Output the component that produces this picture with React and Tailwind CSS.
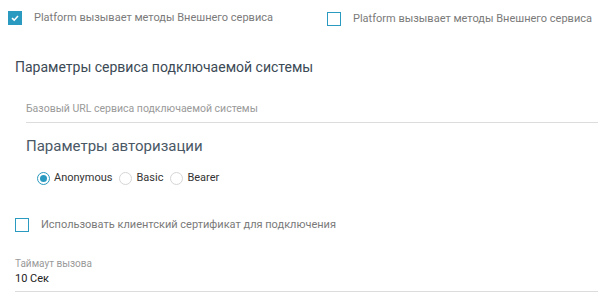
import React, { useState } from 'react';

const font = { fontFamily: 'Roboto, "Noto Sans", sans-serif' };

const Checkbox = ({ checked, label, onChange }) => (
  <label className="flex items-center cursor-pointer">
    <span
      className={
        'w-[14px] h-[14px] flex items-center justify-center border-[1.5px] border-[#2a9ac0] ' +
        (checked ? 'bg-[#2a9ac0]' : 'bg-white')
      }
      onClick={onChange}
    >
      {checked && (
        <svg width="10" height="10" viewBox="0 0 10 10">
          <path d="M2 5.2 L4.2 7.2 L8 3" fill="none" stroke="white" strokeWidth="1.6" />
        </svg>
      )}
    </span>
    <span className="ml-[12px] text-[11px] text-[#7a7a7a]">{label}</span>
  </label>
);

const Radio = ({ checked, label, onChange }) => (
  <label className="flex items-center cursor-pointer" onClick={onChange}>
    <span
      className={
        'w-[13px] h-[13px] rounded-full flex items-center justify-center border ' +
        (checked ? 'border-[#2a9ac0]' : 'border-[#d6d6d6]')
      }
    >
      {checked && <span className="w-[7px] h-[7px] rounded-full bg-[#2a9ac0]" />}
    </span>
    <span className="ml-[4px] text-[11px] text-[#333]">{label}</span>
  </label>
);

export default function App() {
  const [platformA, setPlatformA] = useState(true);
  const [platformB, setPlatformB] = useState(false);
  const [cert, setCert] = useState(false);
  const [auth, setAuth] = useState('Anonymous');

  return (
    <div className="w-[598px] h-[302px] bg-white overflow-hidden" style={font}>
      {/* top checkboxes */}
      <div className="flex pt-[10px] h-[25px]">
        <div className="pl-[8px] w-[327px]">
          <Checkbox
            checked={platformA}
            onChange={() => setPlatformA(!platformA)}
            label="Platform вызывает методы Внешнего сервиса"
          />
        </div>
        <div className="pt-[1px]">
          <Checkbox
            checked={platformB}
            onChange={() => setPlatformB(!platformB)}
            label="Platform вызывает методы Внешнего сервиса"
          />
        </div>
      </div>

      <div className="pl-[15px] mt-[34px] text-[14px] leading-[16px] text-[#3c4a56]">
        Параметры сервиса подключаемой системы
      </div>

      {/* base url */}
      <div className="ml-[26px] mt-[27px] border-b border-[#dcdcdc] pb-[6px] text-[10.5px] leading-[14px] text-[#9a9a9a]">
        Базовый URL сервиса подключаемой системы
      </div>

      <div className="pl-[26px] mt-[14px] text-[15px] leading-[18px] text-[#4a5866]">
        Параметры авторизации
      </div>

      <div className="flex items-center gap-[7px] pl-[37px] mt-[15px]">
        {['Anonymous', 'Basic', 'Bearer'].map((a) => (
          <Radio key={a} label={a} checked={auth === a} onChange={() => setAuth(a)} />
        ))}
      </div>

      <div className="pl-[15px] mt-[30px]">
        <Checkbox
          checked={cert}
          onChange={() => setCert(!cert)}
          label="Использовать клиентский сертификат для подключения"
        />
      </div>

      <div className="ml-[15px] mt-[24px] border-b border-[#dcdcdc] pb-[5px]">
        <div className="text-[10px] leading-[13px] text-[#9a9a9a]">Таймаут вызова</div>
        <div className="text-[11px] leading-[14px] text-[#222] mt-[2px]">10 Сек</div>
      </div>
    </div>
  );
}
